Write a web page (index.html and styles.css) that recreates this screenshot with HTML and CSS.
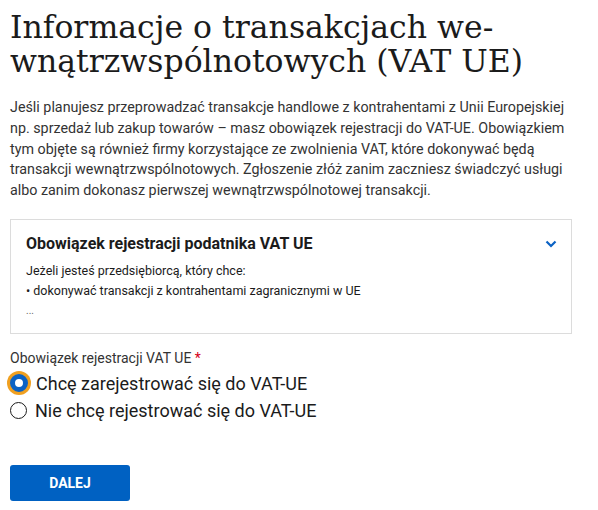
FILE: index.html
```html
<!DOCTYPE html>
<html lang="pl">
<head>
    <meta charset="UTF-8">
    <meta name="viewport" content="width=device-width, initial-scale=1.0">
    <title>VAT UE</title>
    <link rel="stylesheet" href="styles.css">
</head>
<body>

    <main class="page">
        <h1 class="title">Informacje o transakcjach we-wnątrzwspólnotowych (VAT UE)</h1>

        <p class="intro">Jeśli planujesz przeprowadzać transakcje handlowe z kontrahentami z Unii Europejskiej np. sprzedaż lub zakup towarów – masz obowiązek rejestracji do VAT-UE. Obowiązkiem tym objęte są również firmy korzystające ze zwolnienia VAT, które dokonywać będą transakcji wewnątrzwspólnotowych. Zgłoszenie złóż zanim zaczniesz świadczyć usługi albo zanim dokonasz pierwszej wewnątrzwspólnotowej transakcji.</p>

        <!-- Accordion -->
        <section class="accordion">
            <div class="accordion-head">
                <h2>Obowiązek rejestracji podatnika VAT UE</h2>
                <svg class="chevron" width="12" height="8" viewBox="0 0 12 8">
                    <path d="M1.5 1.5 L6 6 L10.5 1.5" fill="none" stroke="#0b62c4" stroke-width="2.2"/>
                </svg>
            </div>
            <div class="accordion-body">
                <p>Jeżeli jesteś przedsiębiorcą, który chce:</p>
                <p>• dokonywać transakcji z kontrahentami zagranicznymi w UE</p>
                <p class="more">...</p>
            </div>
        </section>

        <!-- Form -->
        <form class="form">
            <div class="field-label">Obowiązek rejestracji VAT UE <span class="required">*</span></div>
            <label class="radio">
                <input type="radio" name="vat" checked>
                <span class="dot selected focused"></span>
                Chcę zarejestrować się do VAT-UE
            </label>
            <label class="radio">
                <input type="radio" name="vat">
                <span class="dot"></span>
                Nie chcę rejestrować się do VAT-UE
            </label>
            <button type="button" class="btn-primary">DALEJ</button>
        </form>
    </main>

</body>
</html>
```

FILE: styles.css
```css
body {
    margin: 0;
    font-family: Roboto, Arial, sans-serif;
    color: #1b1b1b;
    background-color: white;
}

.page {
    padding: 10px 10px 6px 10px;
    width: 562px;
}

.title {
    font-family: "DejaVu Serif", Georgia, serif;
    font-weight: normal;
    font-size: 31.5px;
    line-height: 34px;
    margin: 0 0 19px 0;
    color: #1b1b1b;
}

.intro {
    font-size: 14.3px;
    line-height: 20.8px;
    color: #333;
    margin: 0 0 18px 0;
    width: 560px;
}

.accordion {
    border: 1px solid #dcdcdc;
    padding: 14px 14px 12px 15px;
}

.accordion-head {
    display: flex;
    justify-content: space-between;
    align-items: center;
}

.accordion-head h2 {
    font-size: 16px;
    font-weight: bold;
    margin: 0;
    line-height: 20px;
}

.accordion-body {
    margin-top: 7px;
    font-size: 12.5px;
    line-height: 20px;
    color: #1b1b1b;
}

.accordion-body p {
    margin: 0;
}

.accordion-body .more {
    font-size: 10px;
    color: #666;
}

.form {
    margin-top: 16px;
}

.field-label {
    font-size: 14px;
    color: #333;
    margin-bottom: 4px;
}

.required {
    color: #d4001a;
}

.radio {
    display: flex;
    align-items: center;
    gap: 8px;
    font-size: 18px;
    line-height: 27px;
}

.radio input {
    display: none;
}

.dot {
    width: 17px;
    height: 17px;
    border: 1.5px solid #1b1b1b;
    border-radius: 50%;
    box-sizing: border-box;
}

.dot.selected {
    width: 18px;
    height: 18px;
    border: 5px solid #0b62c4;
    background-color: white;
}

.dot.focused {
    box-shadow: 0 0 0 3px #f0a020;
}

.btn-primary {
    margin-top: 41px;
    width: 120px;
    height: 36px;
    border: none;
    border-radius: 3px;
    background-color: #0061c2;
    color: white;
    font-family: Roboto, Arial, sans-serif;
    font-weight: bold;
    font-size: 14px;
    cursor: pointer;
}
```
